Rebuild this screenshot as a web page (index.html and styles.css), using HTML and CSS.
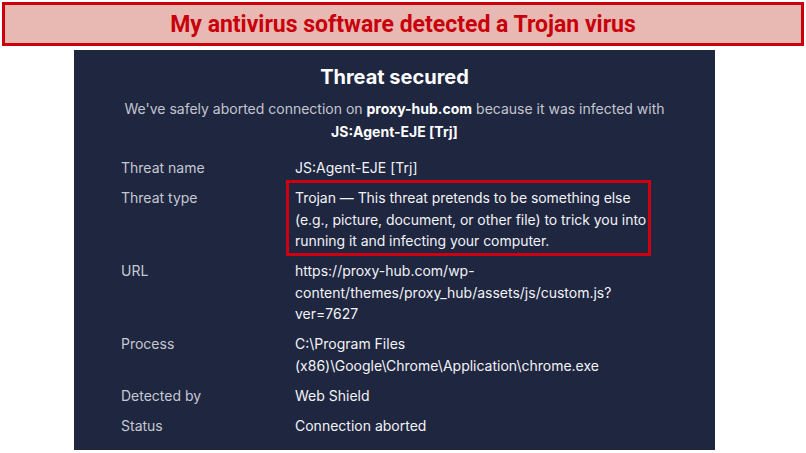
FILE: index.html
```html
<!DOCTYPE html>
<html>
<head>
<meta charset="utf-8">
<link rel="stylesheet" href="styles.css">
</head>
<body>
<div class="banner"><span class="banner-text">My antivirus software detected a Trojan virus</span></div>
<div class="panel">
  <h1 class="title">Threat secured</h1>
  <p class="sub">We've safely aborted connection on <b>proxy-hub.com</b> because it was infected with<br><b>JS:Agent-EJE [Trj]</b></p>
  <div class="rows">
    <div class="label">Threat name</div>
    <div class="value">JS:Agent-EJE [Trj]</div>
    <div class="label">Threat type</div>
    <div class="value boxed">Trojan — This threat pretends to be something else<br>(e.g., picture, document, or other file) to trick you into<br>running it and infecting your computer.</div>
    <div class="label">URL</div>
    <div class="value">https://proxy-hub.com/wp-<br>content/themes/proxy_hub/assets/js/custom.js?<br>ver=7627</div>
    <div class="label">Process</div>
    <div class="value">C:\Program Files<br>(x86)\Google\Chrome\Application\chrome.exe</div>
    <div class="label">Detected by</div>
    <div class="value">Web Shield</div>
    <div class="label">Status</div>
    <div class="value">Connection aborted</div>
  </div>
</div>
</body>
</html>
```
FILE: styles.css
```css
* { box-sizing: border-box; }
html, body { margin: 0; padding: 0; background: #ffffff; }
body { width: 806px; height: 453px; overflow: hidden; }
.banner {
  margin: 2px 2px 0 2px;
  height: 44px;
  border: 3px solid #c8000b;
  background: #e8b8b2;
  display: flex;
  align-items: center;
  justify-content: center;
}
.banner-text {
  display: inline-block;
  font-family: Roboto, "Liberation Sans", sans-serif;
  font-weight: 700;
  font-size: 23px;
  color: #c8000b;
}
.panel {
  margin: 4px 0 0 74px;
  width: 641px;
  height: 400px;
  background: #1f2640;
  font-family: Inter, "Open Sans", sans-serif;
  padding: 14px 62px 0 47px;
}
.title {
  margin: 0 -15px 0 0;
  text-align: center;
  font-size: 20px;
  font-weight: 700;
  color: #ffffff;
  line-height: 26px;
}
.sub {
  margin: 7px -15px 0 0;
  text-align: center;
  font-size: 14px;
  line-height: 23px;
  color: #c3c6cf;
}
.sub b { color: #ffffff; font-weight: 700; }
.rows {
  margin-top: 14px;
  display: grid;
  grid-template-columns: 174px 1fr;
  row-gap: 8.5px;
  font-size: 14px;
  line-height: 21.5px;
}
.label { color: #c6c9d2; }
.value { color: #f2f3f6; }
.boxed {
  border: 3px solid #cc0010;
  margin: -7px 2px -4px -9px;
  padding: 4px 0 1px 6px;
  letter-spacing: -0.05px;
  white-space: nowrap;
}
```
